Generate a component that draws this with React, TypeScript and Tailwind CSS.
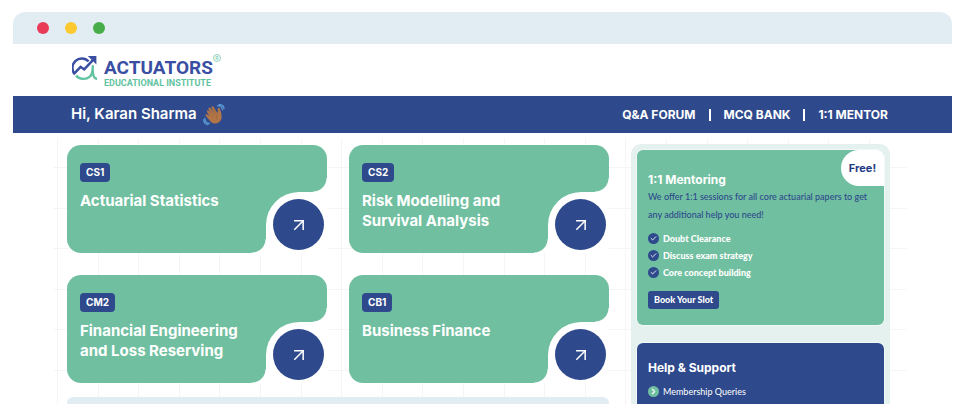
import { ArrowUpRight, Check, ChevronRight } from "lucide-react";

interface Course {
  code: string;
  title: string;
}

const courses: Course[] = [
  { code: "CS1", title: "Actuarial Statistics" },
  { code: "CS2", title: "Risk Modelling and Survival Analysis" },
  { code: "CM2", title: "Financial Engineering and Loss Reserving" },
  { code: "CB1", title: "Business Finance" },
];

const perks = ["Doubt Clearance", "Discuss exam strategy", "Core concept building"];
const helpLinks = ["Membership Queries"];
const navLinks = ["Q&A FORUM", "MCQ BANK", "1:1 MENTOR"];

function Logo() {
  return (
    <a href="#" className="flex items-start" aria-label="Actuators Educational Institute">
      <svg viewBox="0 0 26 26" className="mt-px ml-px size-[26px]" fill="none">
        <path d="M3 19.4A9.3 9.3 0 0 1 16.6 6.4" stroke="#3a4fa3" strokeWidth="2.5" />
        <path d="M2.6 18.2l6-6.4 3.6 2.6L21.6 4.4" stroke="#3a4fa3" strokeWidth="2.5" />
        <path d="M15.8 1h8.600v8.400z" fill="#3a4fa3" />
        <path d="M4 20.600c3.400 4 10 4.300 13.800 1 2.600-2.400 3.200-6 3-11.400" stroke="#62c3a0" strokeWidth="2.400" />
        <path d="M20.800 15c-.1 5.600.6 8.400 4.200 9" stroke="#62c3a0" strokeWidth="2.400" />
      </svg>
      <span className="ml-[6px] mt-1 flex flex-col font-['Roboto',sans-serif]">
        <span className="text-[19px] leading-5 font-bold text-[#3a4fa3]">ACTUATORS</span>
        <span className="text-[9px] leading-[10px] font-bold text-[#62c3a0]">EDUCATIONAL INSTITUTE</span>
      </span>
      <span className="flex size-2 items-center justify-center rounded-full border border-[#8fd3ba] text-[5px] leading-none text-[#62c3a0]">
        R
      </span>
    </a>
  );
}

function WavingHand() {
  return (
    <svg viewBox="0 0 22 22" className="size-[22px]" fill="none" aria-hidden="true">
      <path
        d="M4.2 8.2c-.9-1.4.8-2.6 1.9-1.3l2.3 2.7-2.7-4.2c-.9-1.5 1-2.7 2.1-1.2l3 4.2L8.600 3.800c-.7-1.500 1.300-2.300 2.100-.9l3.200 5.400c.5.8 1.100.6 1-.3l-.2-2.700c-.1-1.900 1.800-2.200 2.300-.4l1.300 4.700c1 4.100.1 7.300-2.700 9-3.100 1.900-6.200 1-8.500-1.700L2.900 12.100c-1-1.300.5-2.500 1.700-1.400l1.700 1.500z"
        fill="#b27548"
      />
      <path d="M6.2 9l3.4 3.8M8.4 7.2l3.2 4.2M10.8 6l2.400 4M13.600 15.200c-.7-2 .2-3.700 1.700-4.600" stroke="#9a6239" strokeWidth=".7" strokeLinecap="round" />
      <path d="M14.5 1.8c2.6-.5 4.7 1.2 5 4M16 .6c2.8-.2 4.8 1.5 5 4.2M1.9 14.2c0 2.9 1.7 4.9 4.5 5.2M.7 15.6c.1 2.9 1.7 4.7 4.3 5" stroke="#5b9bd5" strokeWidth="1.2" strokeLinecap="round" />
    </svg>
  );
}

// faint graph-paper lines behind the dashboard
function GridLines() {
  const pitch = 40.6;
  return (
    <svg className="absolute inset-0 -z-10 h-full w-full" stroke="#f5f5f6" shapeRendering="crispEdges" aria-hidden="true">
      {Array.from({ length: 21 }, (_, i) => {
        const x = Math.round(44 + i * pitch);
        return <line key={i} x1={x} x2={x} y1="5" y2="100%" />;
      })}
      {Array.from({ length: 6 }, (_, i) => {
        const y = Math.round(34 + i * pitch);
        return <line key={i} x1="41" x2="894" y1={y} y2={y} />;
      })}
    </svg>
  );
}

function CourseCard({ code, title }: Course) {
  return (
    <article className="relative h-[108px] rounded-[14px] bg-[#70bfa0] pt-[18px] pr-[70px] pl-[13px]">
      <span className="flex h-[19px] w-fit items-center rounded bg-[#2e4a8c] px-[6px] text-[10px] font-bold text-white">
        {code}
      </span>
      <h2 className="mt-[9px] text-[15px] leading-5 font-bold text-white">{title}</h2>

      {/* notch in the lower right corner */}
      <div className="absolute right-0 bottom-0 size-[61px] rounded-tl-[33px] bg-white" />
      <div className="absolute right-[61px] bottom-0 size-[14px] bg-[radial-gradient(circle_at_top_left,transparent_13px,white_14px)]" />
      <div className="absolute right-0 bottom-[61px] size-[14px] bg-[radial-gradient(circle_at_top_left,transparent_13px,white_14px)]" />
      <button
        aria-label={`Open ${code}`}
        className="absolute right-[3px] bottom-[3px] flex size-[51px] items-center justify-center rounded-full bg-[#2e4a8c] text-white"
      >
        <ArrowUpRight size={20} strokeWidth={1.8} strokeLinecap="square" strokeLinejoin="miter" />
      </button>
    </article>
  );
}

function MentoringPanel() {
  return (
    <section className="relative rounded-md bg-[#70bfa0] px-[11px] pt-[22px] pb-4 ring-1 ring-white/50">
      <span className="absolute top-0 right-0 flex h-9 w-[43px] items-center justify-center rounded-l-[18px] rounded-tr-md bg-white text-[11px] font-bold text-[#1f3a85]">
        Free!
      </span>
      <h2 className="text-[12px] leading-4 font-bold text-white">1:1 Mentoring</h2>
      <p className="font-['Lato',sans-serif] text-[9px] leading-[18px] font-medium text-[#2e4a8c]">
        We offer 1:1 sessions for all core actuarial papers to get any additional help you need!
      </p>
      <ul className="mt-[6px] font-['Lato',sans-serif] text-[9px] font-black text-white">
        {perks.map((perk) => (
          <li key={perk} className="flex h-[17px] items-center gap-1">
            <span className="flex size-[11px] items-center justify-center rounded-full bg-[#2e4a8c]">
              <Check size={7} strokeWidth={3} />
            </span>
            {perk}
          </li>
        ))}
      </ul>
      <button className="mt-[10px] block h-[18px] rounded-[3px] bg-[#2e4a8c] px-[6px] font-['Lato',sans-serif] text-[9px] font-black text-white">
        Book Your Slot
      </button>
    </section>
  );
}

function HelpPanel() {
  return (
    <section className="rounded-md bg-[#2e4a8c] px-[11px] pt-[17px] pb-8 text-white ring-1 ring-white/50">
      <h2 className="text-[12px] leading-4 font-bold">Help &amp; Support</h2>
      <ul className="mt-[7px] font-['Lato',sans-serif] text-[9px]">
        {helpLinks.map((link) => (
          <li key={link}>
            <a href="#" className="flex h-[17px] items-center gap-1">
              <span className="flex size-[11px] items-center justify-center rounded-full bg-[#70bfa0]">
                <ChevronRight size={9} strokeWidth={3} />
              </span>
              {link}
            </a>
          </li>
        ))}
      </ul>
    </section>
  );
}

export default function App() {
  return (
    <div className="flex h-screen flex-col bg-white px-[13px] pt-3 pb-[11px] font-['Inter',sans-serif]">
      <div className="flex h-8 shrink-0 items-center gap-4 rounded-t-xl bg-[#e2edf3] px-6">
        <span className="size-3 rounded-full bg-[#e93a58]" />
        <span className="size-3 rounded-full bg-[#fdc930]" />
        <span className="size-3 rounded-full bg-[#47ad48]" />
      </div>

      <header className="h-[52px] shrink-0 pt-[10px] pl-[58px]">
        <Logo />
      </header>

      <div className="flex h-[37px] shrink-0 items-center justify-between bg-[#2e4a8c] pr-16 pl-[58px] text-white">
        <p className="flex items-center gap-[6px] text-[15px] font-semibold">
          Hi, Karan Sharma
          <WavingHand />
        </p>
        <nav className="flex items-center text-[12px] font-bold">
          {navLinks.map((link, i) => (
            <span key={link} className="flex items-center">
              {i > 0 && <span className="mx-[13px] h-3 w-[2px] bg-white" />}
              <a href="#">{link}</a>
            </span>
          ))}
        </nav>
      </div>

      <div className="relative isolate flex min-h-0 flex-1 gap-[22px] overflow-hidden pt-3 pr-[62px] pl-[54px]">
        <GridLines />
        <main className="flex-1">
          <div className="grid grid-cols-2 gap-[22px]">
            {courses.map((course) => (
              <CourseCard key={course.code} {...course} />
            ))}
          </div>
          <div className="mt-[14px] h-16 rounded-md bg-[#e2edf3]" />
        </main>
        <aside className="-mt-px flex w-[259px] shrink-0 flex-col gap-[18px] self-start rounded-[10px] bg-[#e5f1ef] p-[6px]">
          <MentoringPanel />
          <HelpPanel />
        </aside>
      </div>
    </div>
  );
}
